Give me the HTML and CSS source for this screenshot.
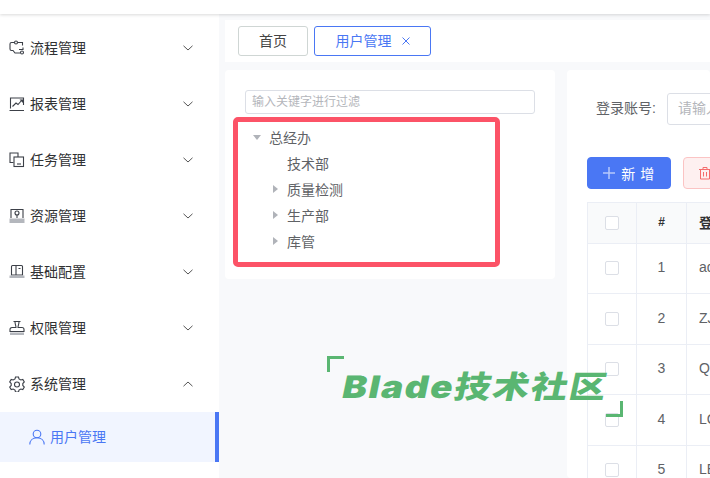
FILE: index.html
```html
<!DOCTYPE html>
<html lang="en">
<head>
  <meta charset="UTF-8" />
  <title>用户管理</title>
  <link rel="stylesheet" href="styles.css">
</head>
<body>
<div class="topbar"></div>
<div class="layout">
  <div class="sidebar">
    <div class="menu-item">
      <svg class="menu-icon" viewBox="0 0 16 16"><path d="M5 2.500H2.500a1.500 1.500 0 0 0-1.500 1.500v5a1.500 1.500 0 0 0 1.500 1.500H4l2 2.500h5M9 2.500h4.500v3M14 7.500v2h-4"/><circle cx="7" cy="2.500" r="1.500"/><circle cx="13" cy="12.500" r="1.500"/></svg>
      <span class="menu-label">流程管理</span>
      <svg class="chevron" viewBox="0 0 10 6"><path d="M.5.800 5 5 9.500.8"/></svg>
    </div>
    <div class="menu-item">
      <svg class="menu-icon" viewBox="0 0 16 16"><path d="M14.500 9V2H1.500v10.500M.5 14.500h14.500M3.500 10.500 7 7l2 1.500 4-4.500"/><path class="fill" d="M10.500 3.500h3.500V7z"/></svg>
      <span class="menu-label">报表管理</span>
      <svg class="chevron" viewBox="0 0 10 6"><path d="M.5.800 5 5 9.500.8"/></svg>
    </div>
    <div class="menu-item">
      <svg class="menu-icon" viewBox="0 0 16 16"><path d="M4.500 10.500H1V1h8v4"/><rect x="5" y="5" width="9.500" height="9.500"/><path d="M8 12h4"/></svg>
      <span class="menu-label">任务管理</span>
      <svg class="chevron" viewBox="0 0 10 6"><path d="M.5.800 5 5 9.500.8"/></svg>
    </div>
    <div class="menu-item">
      <svg class="menu-icon" viewBox="0 0 16 16"><path d="M2 10V1.500h12V10"/><circle cx="8" cy="5" r="2"/><path d="M8 7v3"/><path class="fill grey" d="M.5 10.500h15V15H.5z"/></svg>
      <span class="menu-label">资源管理</span>
      <svg class="chevron" viewBox="0 0 10 6"><path d="M.5.800 5 5 9.500.8"/></svg>
    </div>
    <div class="menu-item">
      <svg class="menu-icon" viewBox="0 0 16 16"><path d="M2.500 11V2.500a1 1 0 0 1 1-1h9a1 1 0 0 1 1 1V11zM7 1.500V11M9.500 4.500h2"/><path class="fill grey" d="M.5 11.500h15V14H.5z"/></svg>
      <span class="menu-label">基础配置</span>
      <svg class="chevron" viewBox="0 0 10 6"><path d="M.5.800 5 5 9.500.8"/></svg>
    </div>
    <div class="menu-item">
      <svg class="menu-icon" viewBox="0 0 16 16"><path d="M4.500 1.500h7M6 1.500c0 3 1 4 1 6H3a2 2 0 0 0-2 2v2h14v-2a2 2 0 0 0-2-2H9c0-2 1-3 1-6"/><path class="fill grey" d="M1 12.500h14V15H1z"/></svg>
      <span class="menu-label">权限管理</span>
      <svg class="chevron" viewBox="0 0 10 6"><path d="M.5.800 5 5 9.500.8"/></svg>
    </div>
    <div class="menu-item">
      <svg class="menu-icon" viewBox="0 0 16 16"><path d="M6.500 1h3l.5 2 1.800 1 2-.6 1.500 2.600-1.500 1.500v2l1.500 1.500-1.500 2.600-2-.6-1.800 1-.5 2h-3l-.5-2-1.800-1-2 .6L.7 11l1.500-1.500v-2L.7 6l1.500-2.600 2 .6L6 3z"/><circle cx="8" cy="8.500" r="2.500"/></svg>
      <span class="menu-label">系统管理</span>
      <svg class="chevron" viewBox="0 0 10 6"><path d="M.5 5.200 5 1l4.500 4.200"/></svg>
    </div>
    <div class="submenu-item">
      <svg class="menu-icon" viewBox="0 0 16 16"><circle cx="8" cy="5" r="3.800"/><path d="M.8 15.500c0-4 3-6.700 7.200-6.700s7.200 2.700 7.200 6.700"/></svg>
      <span class="menu-label">用户管理</span>
    </div>
  </div>

  <div class="main">
    <div class="tabs">
      <div class="tab">首页</div>
      <div class="tab active">用户管理<svg class="tab-close" viewBox="0 0 8 8"><path d="M.5.500l7 7M7.500.5l-7 7"/></svg></div>
    </div>
    <div class="content">
      <div class="panel tree-panel">
        <input class="filter-input" type="text" placeholder="输入关键字进行过滤" />
        <div class="tree">
          <div class="tree-row"><span class="caret down"></span>总经办</div>
          <div class="tree-row child"><span class="caret none"></span>技术部</div>
          <div class="tree-row child"><span class="caret"></span>质量检测</div>
          <div class="tree-row child"><span class="caret"></span>生产部</div>
          <div class="tree-row child"><span class="caret"></span>库管</div>
        </div>
        <div class="highlight"></div>
      </div>

      <div class="panel table-panel">
        <div class="search-row">
          <span class="search-label">登录账号:</span>
          <input class="search-input" type="text" placeholder="请输入登录账号" />
        </div>
        <div class="btn-row">
          <button class="btn btn-add"><svg class="plus" viewBox="0 0 12 12"><path d="M6 0v12M0 6h12"/></svg>新 增</button>
          <button class="btn btn-del">
            <svg class="trash" viewBox="0 0 14 14"><path d="M1 3.500h12M5 3.500V1.500h4v2M2.500 3.500V13h9V3.500M5.500 6v4.500M8.500 6v4.500"/></svg>
            删 除
          </button>
        </div>
        <table class="user-table">
          <tr class="head"><th class="col-check"><span class="check"></span></th><th class="col-num">#</th><th>登录账号</th></tr>
          <tr class="r1"><td><span class="check"></span></td><td>1</td><td>admin</td></tr>
          <tr class="r2"><td><span class="check"></span></td><td>2</td><td>ZJ001</td></tr>
          <tr class="r1"><td><span class="check"></span></td><td>3</td><td>QC001</td></tr>
          <tr class="r2"><td><span class="check"></span></td><td>4</td><td>LC001</td></tr>
          <tr class="r1"><td><span class="check"></span></td><td>5</td><td>LE001</td></tr>
        </table>
      </div>
    </div>
  </div>
</div>

<div class="watermark">
  <span class="corner tl"></span>
  <span class="wm-text">Blade技术社区</span>
  <span class="corner br"></span>
</div>
</body>
</html>
```

FILE: styles.css
```css
* {
  box-sizing: border-box;
}
html, body {
  height: 100%;
}
body {
  margin: 0;
  overflow: hidden;
  font-family: "Liberation Sans", "Noto Sans CJK SC", sans-serif;
  font-size: 14px;
  color: #333;
  background-color: #f8f9fb;
  display: flex;
  flex-direction: column;
}
.topbar {
  height: 14px;
  flex-shrink: 0;
  background-color: #fff;
  box-shadow: 0 1px 3px rgba(0,0,0,0.15);
  position: relative;
}
.layout {
  flex: 1;
  display: flex;
  min-height: 0;
}

/* sidebar */
.sidebar {
  width: 219px;
  flex-shrink: 0;
  background-color: #fff;
  padding-top: 6px;
}
.menu-item {
  height: 56px;
  display: flex;
  align-items: center;
  padding-left: 9px;
  color: #303133;
}
.menu-icon {
  width: 16px;
  height: 16px;
  margin-right: 5px;
  flex-shrink: 0;
  fill: none;
  stroke: #3c4048;
  stroke-width: 1.100;
}
.menu-icon .fill {
  fill: #3c4048;
  stroke: none;
}
.menu-icon .grey {
  fill: #b4b7bd;
}
.menu-label {
  flex: 1;
  padding-bottom: 2px;
}
.chevron {
  width: 10px;
  height: 6px;
  margin-right: 26px;
  fill: none;
  stroke: #555;
  stroke-width: 1;
}
.submenu-item {
  height: 50px;
  display: flex;
  align-items: center;
  padding-left: 29px;
  color: #4a77f4;
  background-color: #f1f5ff;
  border-right: 4px solid #4a77f4;
}
.submenu-item .menu-icon {
  stroke: #4a77f4;
}

/* tabs */
.main {
  flex: 1;
  min-width: 0;
  padding: 6px 0 0 6px;
  display: flex;
  flex-direction: column;
  gap: 8px;
}
.tabs {
  height: 42px;
  flex-shrink: 0;
  background-color: #fff;
  display: flex;
  gap: 6px;
  padding: 6px 0 0 13px;
}
.tab {
  height: 30px;
  width: 70px;
  padding-bottom: 2px;
  border: 1px solid #cfd6d4;
  border-radius: 3px;
  display: flex;
  align-items: center;
  justify-content: center;
  color: #444;
}
.tab.active {
  width: 117px;
  border-color: #4a77f4;
  color: #4a77f4;
}
.tab-close {
  width: 8px;
  height: 8px;
  margin: 2px 0 0 10px;
  fill: none;
  stroke: #4a77f4;
  stroke-width: 1;
}

/* panels */
.content {
  flex: 1;
  min-height: 0;
  display: flex;
  align-items: flex-start;
  gap: 12px;
}
.panel {
  background-color: #fff;
  border-radius: 4px;
}
.tree-panel {
  width: 330px;
  flex-shrink: 0;
  padding: 20px 20px 25px;
  position: relative;
}
.filter-input {
  display: block;
  width: 290px;
  height: 24px;
  padding: 0 6px;
  font: inherit;
  font-size: 12px;
  border: 1px solid #dcdfe6;
  border-radius: 3px;
  outline: none;
}
.filter-input::placeholder,
.search-input::placeholder {
  color: #b4b6bb;
}
.tree {
  margin-top: 10px;
  color: #606266;
}
.tree-row {
  height: 26px;
  display: flex;
  align-items: center;
  padding-left: 8px;
}
.tree-row.child {
  padding-left: 28px;
}
.caret {
  width: 0;
  height: 0;
  margin-right: 9px;
  border-style: solid;
  border-width: 4px 0 4px 5px;
  border-color: transparent transparent transparent #b0b3b9;
}
.caret.down {
  margin-right: 8px;
  border-width: 5px 4px 0 4px;
  border-color: #b0b3b9 transparent transparent transparent;
}
.caret.none {
  border-color: transparent;
}
.highlight {
  position: absolute;
  left: 8px;
  top: 47px;
  width: 267px;
  height: 150px;
  border: 5px solid #fc5367;
  border-radius: 5px;
}

/* right panel */
.table-panel {
  flex: 1;
  min-width: 0;
  height: 100%;
  padding: 23px 0 0 20px;
  overflow: hidden;
}
.search-row {
  display: flex;
  align-items: center;
  height: 32px;
  white-space: nowrap;
}
.search-label {
  width: 80px;
  flex-shrink: 0;
  padding: 0 0 5px 9px;
  color: #606266;
}
.search-input {
  width: 200px;
  height: 32px;
  flex-shrink: 0;
  padding: 0 10px 2px;
  font: inherit;
  border: 1px solid #dcdfe6;
  border-radius: 3px;
  outline: none;
}
.btn-row {
  display: flex;
  gap: 12px;
  margin-top: 32px;
  width: 300px;
}
.btn {
  width: 84px;
  height: 32px;
  flex-shrink: 0;
  display: flex;
  align-items: center;
  justify-content: center;
  font: inherit;
  letter-spacing: 0.5px;
  border-radius: 4px;
  padding: 0;
}
.btn-add {
  color: #fff;
  background-color: #4a77f4;
  border: 1px solid #4a77f4;
}
.plus {
  width: 12px;
  height: 12px;
  margin-right: 6px;
  fill: none;
  stroke: #b7c9fb;
  stroke-width: 1.500;
}
.btn-del {
  color: #f56c6c;
  background-color: #fef0f0;
  border: 1px solid #fbc4c4;
}
.trash {
  width: 14px;
  height: 14px;
  margin-right: 6px;
  fill: none;
  stroke: #f56c6c;
}
.user-table {
  margin-top: 13px;
  width: 400px;
  table-layout: fixed;
  border-collapse: collapse;
}
.user-table th,
.user-table td {
  border: 1px solid #ebeef5;
  padding: 0 0 3px;
  text-align: center;
  color: #606266;
}
.user-table td:last-child,
.user-table th:last-child {
  text-align: left;
  padding-left: 12px;
}
.user-table th {
  background-color: #f9fafb;
  color: #303133;
  font-weight: 700;
}
.col-check {
  width: 49px;
}
.col-num {
  width: 50px;
  font-size: 12px;
}
.head {
  height: 41px;
}
.r1 {
  height: 50px;
}
.r2 {
  height: 51px;
}
.check {
  display: inline-block;
  width: 14px;
  height: 14px;
  vertical-align: middle;
  background-color: #fff;
  border: 1px solid #dcdfe6;
  border-radius: 2px;
}

/* watermark sits over the page */
.watermark {
  position: absolute;
  left: 327px;
  top: 356px;
  width: 296px;
  height: 61px;
  color: #5ab672;
}
.wm-text {
  position: absolute;
  left: 16px;
  top: 11px;
  font-family: "Inter", "Noto Sans CJK SC", sans-serif;
  font-size: 31px;
  line-height: 40px;
  font-weight: 900;
  white-space: nowrap;
  letter-spacing: 1.500px;
  transform: scaleX(1.18) skewX(-10deg);
  transform-origin: left center;
}
.corner {
  position: absolute;
  width: 17px;
  height: 16px;
  border: 0 solid #5ab672;
}
.corner.tl {
  left: 0;
  top: 0;
  border-width: 3px 0 0 3px;
}
.corner.br {
  right: 0;
  bottom: 0;
  border-width: 0 3px 3px 0;
}
```
